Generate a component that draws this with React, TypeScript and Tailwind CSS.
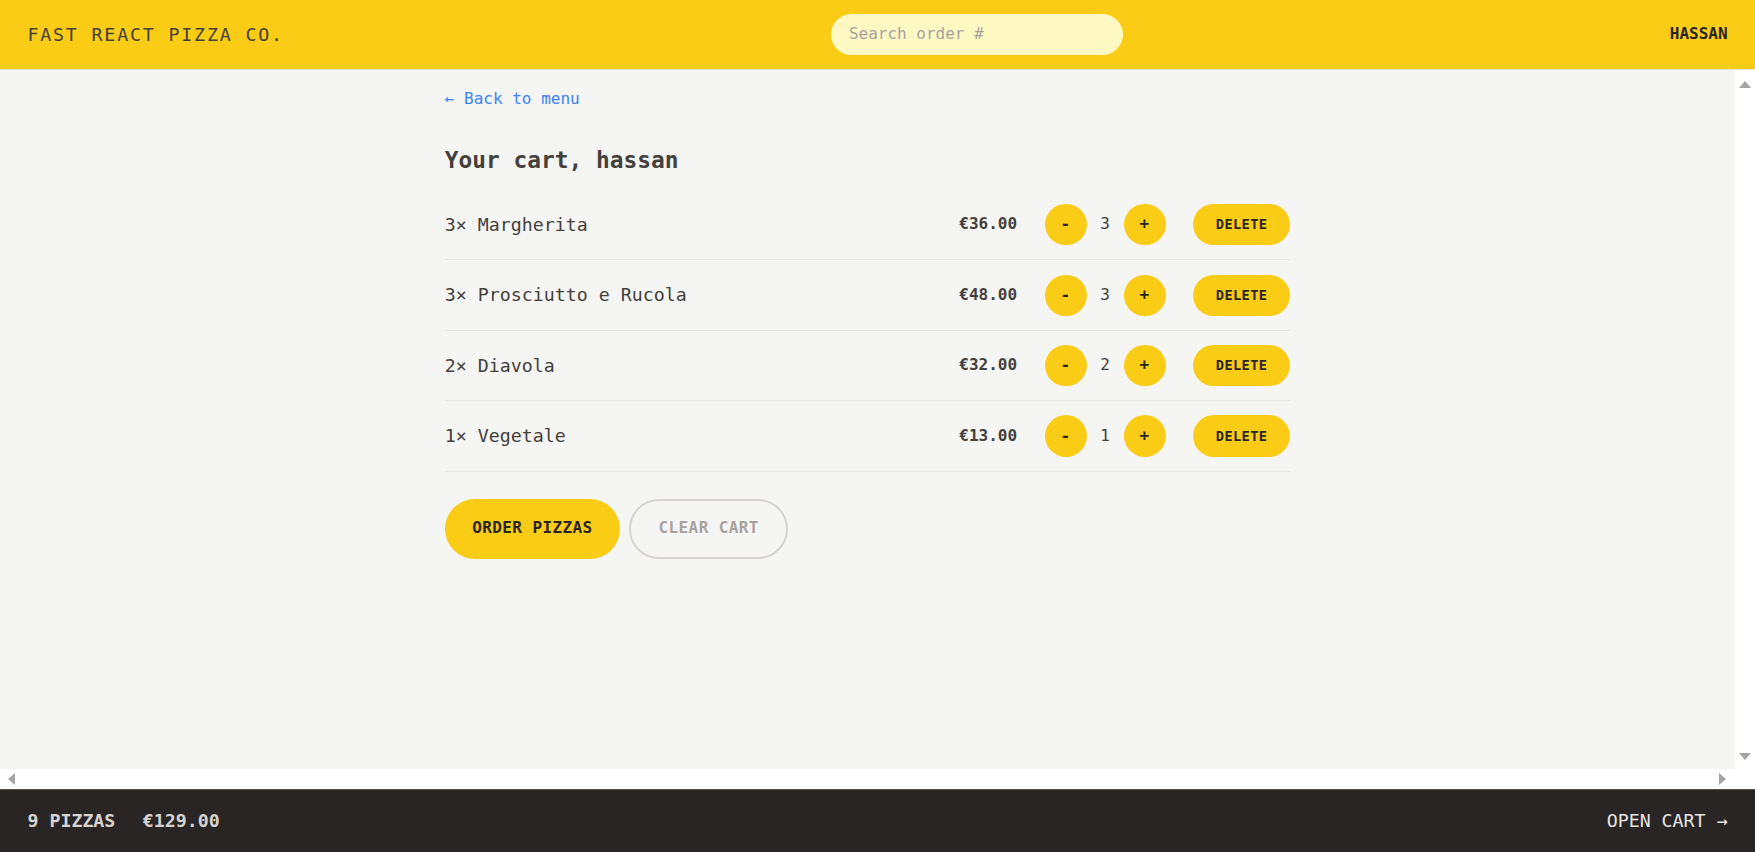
import React from 'react';

type CartItem = { id: number; name: string; quantity: number; total: number };

const CART: CartItem[] = [
  { id: 1, name: 'Margherita', quantity: 3, total: 36 },
  { id: 2, name: 'Prosciutto e Rucola', quantity: 3, total: 48 },
  { id: 3, name: 'Diavola', quantity: 2, total: 32 },
  { id: 4, name: 'Vegetale', quantity: 1, total: 13 },
];

const money = (n: number) => `€${n.toFixed(2)}`;

const roundBtn =
  'inline-block rounded-full bg-[#facc15] px-[16px] py-[9.14px] text-[16px] leading-[22.85px] font-bold uppercase tracking-wide text-[#292524]';

// little scrollbar arrows, like the browser draws them
const Arrow: React.FC<{ dir: 'up' | 'down' | 'left' | 'right' }> = ({ dir }) => {
  const pts = {
    up: '0,7 6,0 12,7',
    down: '0,0 12,0 6,7',
    left: '7,0 7,12 0,6',
    right: '0,0 7,6 0,12',
  }[dir];
  const vertical = dir === 'up' || dir === 'down';
  return (
    <svg width={vertical ? 12 : 7} height={vertical ? 7 : 12} viewBox={vertical ? '0 0 12 7' : '0 0 7 12'}>
      <polygon points={pts} fill="#a3a3a3" />
    </svg>
  );
};

const Item: React.FC<{ item: CartItem }> = ({ item }) => (
  <li className="flex items-center justify-between py-[14.2px]">
    <p>
      {item.quantity}&times; {item.name}
    </p>
    <div className="flex items-center gap-[27.4px]">
      <p className="text-[16px] leading-[22.85px] font-bold">{money(item.total)}</p>
      <div className="flex items-center gap-[13.7px]">
        <button className={roundBtn}>-</button>
        <span className="text-[16px] leading-[22.85px] font-medium">{item.quantity}</span>
        <button className={roundBtn}>+</button>
      </div>
      <button className="inline-block rounded-full bg-[#facc15] px-[22.85px] py-[11.4px] text-[13.7px] leading-[18.28px] font-bold uppercase tracking-wide text-[#292524]">
        Delete
      </button>
    </div>
  </li>
);

export default function App() {
  const count = CART.reduce((s, i) => s + i.quantity, 0);
  const total = CART.reduce((s, i) => s + i.total, 0);

  return (
    <div className="grid h-screen grid-rows-[auto_1fr_auto] bg-[#f5f5f4] text-[#44403c] font-['DejaVu_Sans_Mono','Liberation_Mono',monospace] text-[18.28px] leading-[27.4px]">
      <header className="flex items-center justify-between border-b border-[#e7e5e4] bg-[#facc15] px-[27.4px] py-[14px] uppercase">
        <a className="tracking-widest text-[#44403c]">Fast React Pizza Co.</a>
        <input
          placeholder="Search order #"
          className="w-[292.5px] rounded-full bg-[#fef9c3] px-[18.3px] py-[9.14px] text-[16px] leading-[22.85px] outline-none placeholder:text-[#a8a29e]"
        />
        <div className="text-[16px] leading-[22.85px] font-bold text-[#292524]">hassan</div>
      </header>

      <main className="grid min-h-0 grid-cols-[1fr_20px] grid-rows-[1fr_20px]">
        <div className="min-h-0 overflow-hidden">
          <div className="mx-auto max-w-[882px]">
            <div className="px-[18.3px] py-[13.7px]">
              <a className="text-[16px] text-[#3b82f6]">&larr; Back to menu</a>

              <h2 className="mt-[32px] text-[22.85px] leading-[32px] font-bold">Your cart, hassan</h2>

              <ul className="mt-[13.7px] divide-y divide-[#e7e5e4] border-b border-[#e7e5e4]">
                {CART.map((item) => (
                  <Item key={item.id} item={item} />
                ))}
              </ul>

              <div className="mt-[27.4px] flex gap-[9.14px]">
                <button className="inline-block rounded-full bg-[#facc15] px-[27.4px] py-[18.3px] text-[16px] leading-[22.85px] font-bold uppercase tracking-wide text-[#292524]">
                  Order pizzas
                </button>
                <button className="inline-block rounded-full border-[2.3px] border-[#d6d3d1] px-[27.4px] py-[16px] text-[16px] leading-[22.85px] font-bold uppercase tracking-wide text-[#a8a29e]">
                  Clear cart
                </button>
              </div>
            </div>
          </div>
        </div>

        <div className="flex flex-col items-center justify-between bg-white pt-[11px] pb-[9px]">
          <Arrow dir="up" />
          <Arrow dir="down" />
        </div>
        <div className="flex items-center justify-between bg-white pl-[8px] pr-[9px]">
          <Arrow dir="left" />
          <Arrow dir="right" />
        </div>
        <div className="bg-white" />
      </main>

      <footer className="flex items-center justify-between border-t border-[#57534e] bg-[#292524] px-[27.4px] py-[17.5px] uppercase text-[#e7e5e4]">
        <p className="flex gap-[27.4px] font-bold text-[#d6d3d1]">
          <span>{count} pizzas</span>
          <span>{money(total)}</span>
        </p>
        <a>Open cart &rarr;</a>
      </footer>
    </div>
  );
}
